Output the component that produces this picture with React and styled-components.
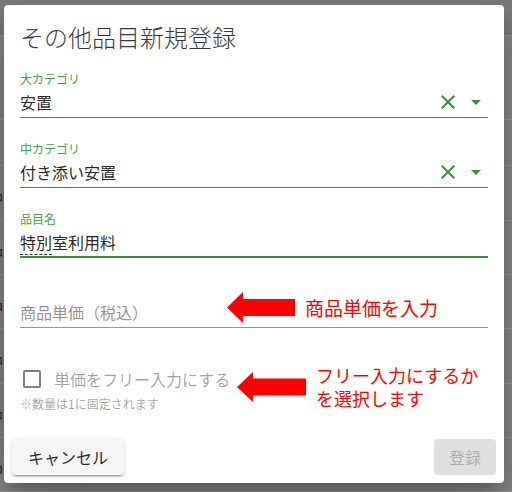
import styled, { createGlobalStyle } from "styled-components"

const GlobalStyle = createGlobalStyle`
  html, body {
    margin: 0;
    padding: 0;
    background: #878787;
    font-family: Roboto, "Noto Sans CJK JP", sans-serif;
  }
`

const Page = styled.div`
  position: relative;
  width: 512px;
  height: 492px;
  overflow: hidden;
  background: #878787;
`

const Backdrop = styled.div`
  display: flex;
  flex-direction: column;
`

const TopBar = styled.div`
  height: 35px;
  background: #7c7c7c;
  border-bottom: 1px solid #9a9a9a;
`

const BackRow = styled.div`
  height: ${(p) => p.h}px;
  border-bottom: 1px solid #9a9a9a;
  display: flex;
  align-items: center;
  font-size: 16px;
  color: #2a2a2a;
  margin-left: -13px;
`

const Dialog = styled.div`
  position: absolute;
  left: 4px;
  top: 5px;
  width: 500px;
  height: 478px;
  background: #fff;
  border-radius: 4px;
  box-shadow: 0 11px 15px -7px rgba(0,0,0,0.2), 0 24px 38px 3px rgba(0,0,0,0.14), 0 9px 46px 8px rgba(0,0,0,0.12);
  display: flex;
  flex-direction: column;
`

const Title = styled.h2`
  margin: 0;
  padding: 16px 16px 0;
  font-size: 24px;
  line-height: 32px;
  font-weight: 300;
  color: rgba(0,0,0,0.8);
  font-family: "Noto Sans CJK JP", sans-serif;
`

const Content = styled.div`
  flex: 1;
  padding: 18px 16px 0;
  display: flex;
  flex-direction: column;
`

const Field = styled.div`
  display: flex;
  flex-direction: column;
  margin-bottom: 23px;
`

const Label = styled.div`
  height: 16px;
  font-size: 12px;
  line-height: 16px;
  color: #43a047;
  font-family: "Noto Sans CJK JP", sans-serif;
`

const InputRow = styled.div`
  display: flex;
  align-items: center;
  height: ${(p) => (p.focused ? 29 : 30)}px;
  border-bottom: ${(p) => (p.focused ? "2px solid #388e3c" : p.filled ? "1px solid #388e3c" : "1px solid rgba(0,0,0,0.42)")};
`

const Value = styled.div`
  flex: 1;
  font-size: 16px;
  line-height: 24px;
  color: ${(p) => (p.placeholder ? "rgba(0,0,0,0.45)" : "rgba(0,0,0,0.87)")};
  font-family: "Noto Sans CJK JP", sans-serif;
`

const Composing = styled.span`
  border-bottom: 1px dashed #333;
`

const IconBox = styled.span`
  display: flex;
  width: 24px;
  height: 24px;
  margin-left: ${(p) => p.gap || 0}px;
  color: #388e3c;
`

const CheckRow = styled.label`
  display: flex;
  align-items: center;
  height: 24px;
  margin-top: 16px;
  padding-left: 3px;
`

const Box = styled.span`
  width: 14px;
  height: 14px;
  border: 2px solid rgba(0,0,0,0.5);
  border-radius: 2px;
  margin-right: 13px;
`

const CheckText = styled.span`
  font-size: 16px;
  color: rgba(0,0,0,0.38);
  font-family: "Noto Sans CJK JP", sans-serif;
`

const Note = styled.div`
  margin-top: 5px;
  font-size: 12px;
  line-height: 16px;
  color: rgba(0,0,0,0.38);
  font-family: "Noto Sans CJK JP", sans-serif;
`

const Actions = styled.div`
  display: flex;
  justify-content: space-between;
  align-items: center;
  padding: 8px;
`

const Button = styled.button`
  height: 36px;
  padding: 0 ${(p) => (p.disabled ? 15 : 16)}px;
  border: none;
  border-radius: 4px;
  font-size: 16px;
  font-family: "Noto Sans CJK JP", sans-serif;
  background: ${(p) => (p.disabled ? "#e0e0e0" : "#f5f5f5")};
  color: ${(p) => (p.disabled ? "rgba(0,0,0,0.26)" : "rgba(0,0,0,0.87)")};
  box-shadow: ${(p) => (p.disabled ? "none" : "0 3px 1px -2px rgba(0,0,0,0.2), 0 2px 2px 0 rgba(0,0,0,0.14), 0 1px 5px 0 rgba(0,0,0,0.12)")};
`

const Callout = styled.div`
  position: absolute;
  left: ${(p) => p.x}px;
  top: ${(p) => p.y}px;
  display: flex;
  align-items: center;
`

const RedText = styled.div`
  display: flex;
  flex-direction: column;
  gap: ${(p) => p.lineGap || 0}px;
  color: #ff0000;
  font-size: ${(p) => p.size}px;
  line-height: ${(p) => p.lh}px;
  font-family: "Noto Sans CJK JP", sans-serif;
  margin-left: ${(p) => p.gap}px;
`

const Arrow = ({ w, h }) => (
  <svg width={w} height={h} viewBox={`0 0 ${w} ${h}`}>
    <polygon
      fill="#ff0000"
      points={`0,${h / 2} 16,0 16,${h / 2 - 8.5} ${w},${h / 2 - 8.5} ${w},${h / 2 + 8.5} 16,${h / 2 + 8.5} 16,${h}`}
    />
  </svg>
)

const ClearIcon = () => (
  <svg width="24" height="24" viewBox="0 0 24 24" fill="currentColor">
    <path d="M19 6.41L17.59 5 12 10.59 6.41 5 5 6.41 10.59 12 5 17.59 6.41 19 12 13.41 17.59 19 19 17.59 13.41 12z" />
  </svg>
)

const DropIcon = () => (
  <svg width="24" height="24" viewBox="0 0 24 24" fill="currentColor">
    <path d="M7 10l5 5 5-5z" />
  </svg>
)

const SelectField = ({ label, value }) => (
  <Field>
    <Label>{label}</Label>
    <InputRow filled>
      <Value>{value}</Value>
      <IconBox><ClearIcon /></IconBox>
      <IconBox gap={4}><DropIcon /></IconBox>
    </InputRow>
  </Field>
)

const rows = [83, 45, 54, 53, 53, 54, 53, 53, 53]

function App() {
  return (
    <Page>
      <GlobalStyle />
      <Backdrop>
        <TopBar />
        {rows.map((h, i) => (
          <BackRow key={i} h={h}>{i > 1 ? "品目" : ""}</BackRow>
        ))}
      </Backdrop>
      <Dialog>
        <Title>その他品目新規登録</Title>
        <Content>
          <SelectField label="大カテゴリ" value="安置" />
          <SelectField label="中カテゴリ" value="付き添い安置" />
          <Field>
            <Label>品目名</Label>
            <InputRow focused>
              <Value><Composing>特別</Composing>室利用料</Value>
            </InputRow>
          </Field>
          <Field>
            <Label />
            <InputRow>
              <Value placeholder="1">商品単価（税込）</Value>
            </InputRow>
          </Field>
          <CheckRow>
            <Box />
            <CheckText>単価をフリー入力にする</CheckText>
          </CheckRow>
          <Note>※数量は1に固定されます</Note>
        </Content>
        <Actions>
          <Button>キャンセル</Button>
          <Button disabled>登録</Button>
        </Actions>
        <Callout x={223} y={287}>
          <Arrow w={68} h={31} />
          <RedText size={19} lh={24} gap={10}>商品単価を入力</RedText>
        </Callout>
        <Callout x={233} y={360}>
          <Arrow w={69} h={30} />
          <RedText size={18} lh={20} lineGap={3} gap={10}>
            <span>フリー入力にするか</span>
            <span>を選択します</span>
          </RedText>
        </Callout>
      </Dialog>
    </Page>
  )
}

export default App
